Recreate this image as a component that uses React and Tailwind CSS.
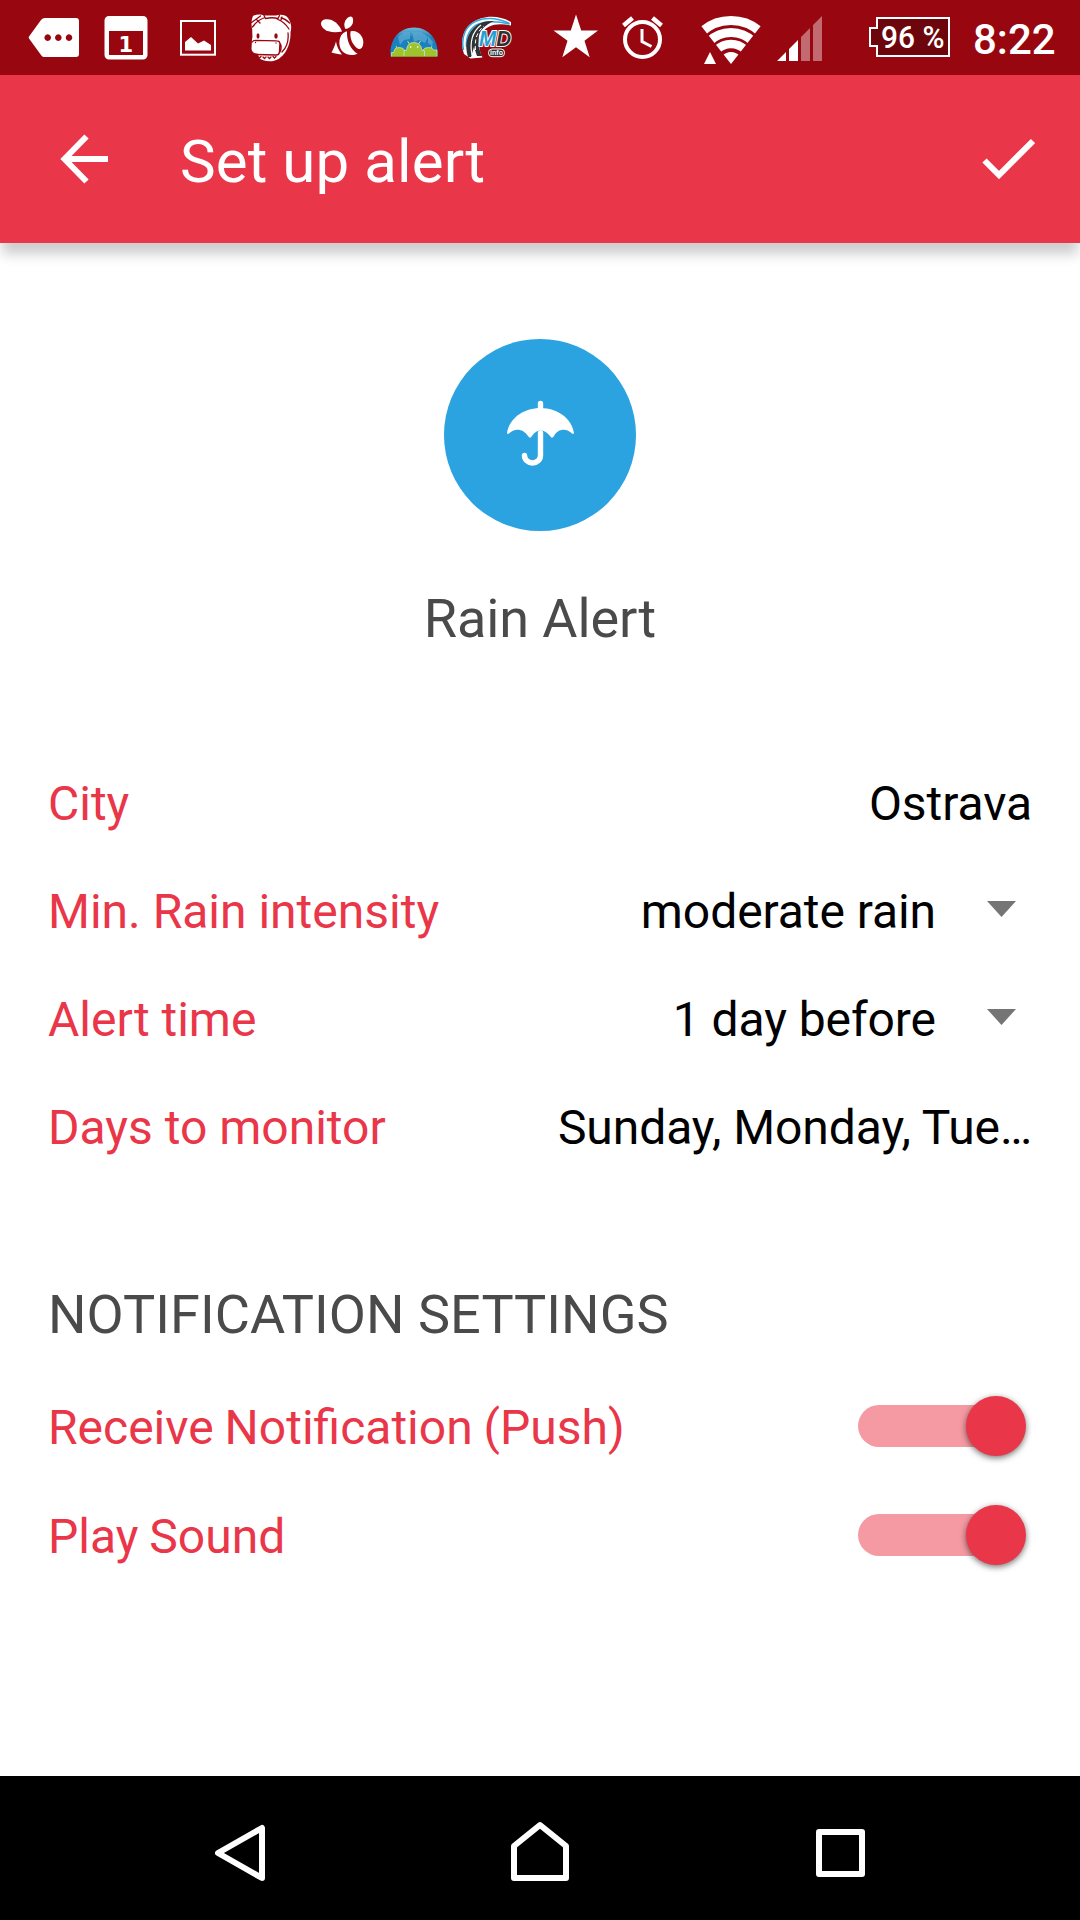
import { useState } from 'react'

const settings = [
  { label: 'City', value: 'Ostrava' },
  { label: 'Min. Rain intensity', value: 'moderate rain', dropdown: true },
  { label: 'Alert time', value: '1 day before', dropdown: true },
  { label: 'Days to monitor', value: 'Sunday, Monday, Tue…' },
]

/* Status bar, notification side */

function MessageIcon() {
  return (
    <svg className="ml-[28px] shrink-0" width="52" height="75" viewBox="28 0 52 75">
      <path fill="#fff" fillRule="evenodd" d="M45 18h31a3 3 0 0 1 3 3v33a3 3 0 0 1-3 3H44q-2 0-3-2L29 38.500q-.6-1 0-2L41 20q1.500-2 4-2ZM47.700 34.300a3.300 3.300 0 1 0 .01 0ZM58.300 34.300a3.300 3.300 0 1 0 .01 0ZM69 34.300a3.300 3.300 0 1 0 .01 0Z" />
    </svg>
  )
}

function CalendarIcon() {
  return (
    <svg className="ml-[24px] shrink-0" width="44" height="75" viewBox="104 0 44 75">
      <path fill="#fff" fillRule="evenodd" d="M109 16h34a4.500 4.500 0 0 1 4.500 4.500v34.500a4.500 4.500 0 0 1-4.500 4.500h-34a4.500 4.500 0 0 1-4.500-4.500V20.500a4.500 4.500 0 0 1 4.500-4.500ZM109 31v24h34V31Z" />
      <text x="125.700" y="51.500" fill="#fff" textAnchor="middle" fontSize="21" fontWeight="700" fontFamily="DejaVu Sans, sans-serif">1</text>
    </svg>
  )
}

function PictureIcon() {
  return (
    <svg className="ml-[32px] shrink-0" width="36" height="75" viewBox="180 0 36 75">
      <rect x="181" y="21" width="34" height="33.700" fill="none" stroke="#fff" strokeWidth="2" />
      <path fill="#fff" d="M185 50.500v-8.500l6-5 7 6.500 6-3 7 4.500v5.500z" />
    </svg>
  )
}

function HippoIcon() {
  return (
    <svg className="ml-[35px] shrink-0" width="41" height="75" viewBox="251 0 41 75">
      <path fill="#fff" d="M253 16c3-2 8-2 11-.5h12c5-1.500 10-.5 12 2.500 3 4 4 9 2.500 14 .5 12-5 26-17 29-6 .8-12-.2-15.500-4l.5-3c-4-.5-6.500-1.500-7-5l.5-10c1-2 0-5 .3-9-1.300-5-1-10 .700-14Z" />
      <g fill="none" stroke="#980710" strokeWidth="1.300" strokeLinecap="round">
        <path d="M251.500 22.500l9-6.500M252.500 27c4-5.500 8-8 12.500-9.500M264 15.500l1.500 3q7-1.500 12.500 0l1.500-3M277 19c5 2 9 5 12 10M281 18c4 .5 6 2.500 8.500 5M257 20l3 3M282 17l-1 3" />
        <path d="M252.200 42q.8-1.700 3.500-1.700l21 .5q3 0 3.200 2.700l-.5 9q-.5 2.500-3 2.500l-21-.5M280.500 44q1.500 4-.5 8M288 33c1 9-2 15-6 19" />
        <path d="M258 56.500l1.500 1.500 1.500-1.500M263 57l1.500 1.500 1.500-1.500M268 57l1.500 1.500 1.500-1.500M273 56.500l1.500 1.500 1.500-1.500" />
      </g>
      <g fill="#980710">
        <ellipse cx="258" cy="36" rx="1.500" ry="2.700" />
        <ellipse cx="276" cy="36" rx="1.700" ry="2.800" />
        <circle cx="255.500" cy="42.500" r=".7" />
        <circle cx="276" cy="43" r=".7" />
      </g>
    </svg>
  )
}

function BeeIcon() {
  return (
    <svg className="ml-[28px] shrink-0" width="44" height="75" viewBox="320 0 44 75">
      <g fill="#fff">
        <path d="M342 31.500c-7 1.500-14.500.8-18.500-3-4-4-3-8.600 2-9.200 7-.8 13.500 4.200 16.500 12.200Z" />
        <path d="M345.500 29c-3.200-5.500.5-11.500 5-12.500 3-.2 3.200 5 1.700 8-1.500 2.600-3.700 4.200-6.700 4.500Z" />
        <path d="M346 31.500c-8 3-8 14.500-4 19.500 4 4.500 11 5 15.500 2.800-7-4.500-11-12.800-10.500-22.300Z" />
        <path d="M350.500 31.500c6.500-2 12.500 4 12.800 10.500 0 5-2 7.500-4.800 7-5.500-3-9-10-8-17.500Z" />
        <path d="M336 41.500c-1 3.500-2.500 7.500-4.500 11 3.500 1 7 1.800 10.500 2-3-4-5.500-8.500-6-13Z" />
      </g>
    </svg>
  )
}

function DroidsIcon() {
  return (
    <svg className="ml-[25px] shrink-0" width="50" height="75" viewBox="389 0 50 75">
      <defs>
        <linearGradient id="sky" x1="0" y1="0" x2="0" y2="1">
          <stop offset="0" stopColor="#6fb9da" />
          <stop offset=".35" stopColor="#1d7fba" />
          <stop offset="1" stopColor="#1186ca" />
        </linearGradient>
      </defs>
      <path d="M390.500 56.500C389 40 399 27.500 414 27.500S439 40 437.500 56.500Z" fill="url(#sky)" />
      <path d="M398 37l6-5h6v7l-6 1-4 5zM412 32h9l7 5-3 6-6-3-5 2zM428 36l5 6-1 4-4-3z" fill="#5da9d2" opacity=".75" />
      <g fill="#9dc32f" stroke="#dbe8b4" strokeWidth=".7">
        <path d="M391.500 56.500v-4h2.500v-1.500q.5-3.500 5-3.500t6 3v6zM437 56.500v-6.500h-3.500q-.5-2.500-5-2.500t-6 3v6z" />
        <path d="M404 56.500v-6h2.500q.5-8 7.500-8t8 8h2.500v6z" />
      </g>
      <path d="M407.500 41l2 3M420.500 41l-2 3M396 46l1 2M432 46l-1 2" stroke="#c9de86" />
      <path d="M391.500 56.500h45.500" stroke="#819c2c" strokeWidth="1" />
      <path d="M410 47h1.300M417 47h1.300" stroke="#fff" strokeWidth="1.300" />
    </svg>
  )
}

function RoadInfoIcon() {
  return (
    <svg className="ml-[22px] shrink-0" width="52" height="75" viewBox="461 0 52 75">
      <path d="M464 54c-4-13-1-25 8-31 10-7.500 26-8.500 39-1v3.500c-14-3-24-.5-29 7.500-4 8-3.500 17 .5 24.500l-12 1z" fill="#fff" />
      <g fill="none" stroke="#35a9dc" strokeWidth="1.500">
        <path d="M463.500 50c-3-14 3-25 13-29 9-3.500 21-3 33 2.500" />
        <path d="M466.500 47c-1-11 4-20 12-23 9-3.500 19-3 31 0" />
      </g>
      <path d="M468 57c-4-12-1-25 9-32 5-3 10-4.500 17-4-9 4-14 9-15 15-1 8 0 14 3 20h-5l-3-9-3 10z" fill="#303336" />
      <path d="M472 55c-2.500-13 0-23 9-30" fill="none" stroke="#fff" strokeWidth="1.200" />
      <path d="M475.500 50c-1-10 1-18 8.500-24" fill="none" stroke="#fff" strokeWidth="1" strokeDasharray="4 2.500" />
      <text
        x="479"
        y="46"
        fontFamily="Liberation Sans, sans-serif"
        fontWeight="700"
        fontStyle="italic"
        fontSize="21.500"
        stroke="#fff"
        strokeWidth="2"
        paintOrder="stroke"
        strokeLinejoin="round"
        textLength="32"
        lengthAdjust="spacingAndGlyphs"
      >
        <tspan fill="#239ed5">M</tspan>
        <tspan fill="#2f3235">D</tspan>
      </text>
      <rect x="488.500" y="49" width="16" height="7.700" rx="3.500" fill="#303336" stroke="#fff" />
      <text x="496.500" y="55.300" fontSize="7" fontWeight="700" fill="#fff" textAnchor="middle" fontFamily="Liberation Sans, sans-serif">info</text>
    </svg>
  )
}

/* Status bar, system side */

function StarIcon() {
  return (
    <svg className="ml-[40px] shrink-0" width="46" height="75" viewBox="553 0 46 75">
      <path fill="#fff" d="M576 14.500l5.200 16H598l-13.500 10.200 5.200 16.500L576 47.200l-13.700 10 5.200-16.500L553.500 30.500h17.300z" />
    </svg>
  )
}

function AlarmIcon() {
  return (
    <svg className="ml-[22px] shrink-0" width="44" height="75" viewBox="621 0 44 75">
      <g fill="none" stroke="#fff">
        <circle cx="642.500" cy="39.500" r="17.500" strokeWidth="4" />
        <path d="M623.500 25.500l9-7.500M661.500 25.500l-9-7.500" strokeWidth="4.500" />
        <path d="M642 29v12.500l9.500 5" strokeWidth="3" />
      </g>
    </svg>
  )
}

function WifiIcon() {
  return (
    <svg className="ml-[36px] shrink-0" width="60" height="75" viewBox="701 0 60 75">
      <clipPath id="wedge">
        <path d="M731 64L696 19.500V0h70v19.500z" />
      </clipPath>
      <g clipPath="url(#wedge)" fill="none" stroke="#fff">
        <circle cx="731" cy="64" r="43.500" strokeWidth="9" />
        <circle cx="731" cy="64" r="31.500" strokeWidth="9" />
        <circle cx="731" cy="64" r="20" strokeWidth="8.500" />
        <circle cx="731" cy="64" r="6" strokeWidth="12" />
      </g>
      <path fill="#fff" d="M710 52l6 12h-12z" />
    </svg>
  )
}

function SignalIcon() {
  return (
    <svg className="ml-[16px] shrink-0" width="46" height="75" viewBox="777 0 46 75">
      <path fill="#fff" d="M777 61l9-9v9zM789 61V49l9-9v21z" />
      <path fill="#fff" fillOpacity=".4" d="M801 61V37l9-9v33zM813 61V25l9-9v45z" />
    </svg>
  )
}

function BatteryIcon() {
  return (
    <svg className="ml-[46px] shrink-0" width="82" height="75" viewBox="869 0 82 75">
      <path d="M877 18h72v38h-72V46h-7V28h7z" fill="#6d060c" stroke="#fff" strokeWidth="2" />
      <text x="881" y="47.700" fill="#fff" fontSize="31" fontWeight="500" fontFamily="Roboto, sans-serif" textLength="63.500" lengthAdjust="spacingAndGlyphs">96 %</text>
    </svg>
  )
}

function StatusBar() {
  return (
    <div className="flex h-[75px] items-center bg-[#980710] text-white">
      <MessageIcon />
      <CalendarIcon />
      <PictureIcon />
      <HippoIcon />
      <BeeIcon />
      <DroidsIcon />
      <RoadInfoIcon />
      <StarIcon />
      <AlarmIcon />
      <WifiIcon />
      <SignalIcon />
      <BatteryIcon />
      <span className="ml-[22px] pt-[4px] text-[42px] leading-none font-medium whitespace-nowrap">8:22</span>
    </div>
  )
}

function Toolbar() {
  return (
    <header className="relative z-10 flex h-[168px] items-center bg-[#e93648] pr-[45px] pl-[60px] text-white shadow-[0_13px_12px_-2px_rgba(0,0,0,0.2)]">
      <button aria-label="Back">
        <svg width="48" height="50" viewBox="60 135 48 50" fill="none" stroke="#fff" strokeWidth="6">
          <path d="M86.500 137.500L64.500 160L86.500 182.500M65 160h43" />
        </svg>
      </button>
      <h1 className="ml-[72px] flex-1 pt-[5px] text-[60px] leading-none tracking-[0.1px]">Set up alert</h1>
      <button aria-label="Save">
        <svg width="53" height="42" viewBox="982 139 53 42" fill="none" stroke="#fff" strokeWidth="6">
          <path d="M984.500 161.500L999 176L1033 142" />
        </svg>
      </button>
    </header>
  )
}

function SettingRow({ label, value, dropdown }) {
  return (
    <div className="flex h-[108px] items-center justify-between text-[48px] leading-[108px] whitespace-nowrap">
      <span className="text-[#e93648]">{label}</span>
      <span className="flex items-center tracking-[-0.07px] text-black">
        {value}
        {dropdown && (
          <svg className="mr-[15px] mb-[6px] ml-[51px]" width="30" height="16" viewBox="0 0 30 16">
            <path d="M0 0h29L14.500 16z" fill="#757575" />
          </svg>
        )}
      </span>
    </div>
  )
}

function ToggleRow({ label }) {
  const [on, setOn] = useState(true)

  return (
    <div className="flex h-[109px] items-center justify-between text-[48px] leading-[109px] whitespace-nowrap text-[#e93648] [word-spacing:-1px]">
      <span>{label}</span>
      <button
        role="switch"
        aria-checked={on}
        aria-label={label}
        onClick={() => setOn(!on)}
        className={`mr-[15px] mb-[4px] flex h-[42px] w-[159px] items-center rounded-full ${
          on ? 'justify-end bg-[#f59aa3]' : 'justify-start bg-gray-400'
        }`}
      >
        <span className={`-mr-[9px] size-[60px] shrink-0 rounded-full shadow-[0_2px_6px_rgba(0,0,0,0.55)] ${on ? 'bg-[#e93648]' : 'bg-gray-100'}`} />
      </button>
    </div>
  )
}

function NavigationBar() {
  return (
    <nav className="flex h-[144px] items-center bg-black">
      <svg className="ml-[214px]" width="52" height="144" viewBox="214 1776 52 144" fill="none" stroke="#fff" strokeWidth="6" strokeLinejoin="round">
        <path d="M262 1828v50L218 1853z" />
      </svg>
      <svg className="ml-[245px]" width="58" height="144" viewBox="511 1776 58 144" fill="none" stroke="#fff" strokeWidth="6" strokeLinejoin="round">
        <path d="M514 1878v-32l26-21 26 21v32z" />
      </svg>
      <svg className="ml-[247px]" width="50" height="144" viewBox="816 1776 50 144" fill="none" stroke="#fff" strokeWidth="6" strokeLinejoin="round">
        <path d="M819 1832h43v42h-43z" />
      </svg>
    </nav>
  )
}

export default function App() {
  return (
    <div className="flex h-[1920px] w-[1080px] flex-col overflow-hidden bg-white font-['Roboto',sans-serif]">
      <StatusBar />
      <Toolbar />

      <main className="flex flex-1 flex-col px-12 pt-24">
        <section className="flex flex-col items-center">
          <div className="flex size-[192px] items-center justify-center rounded-full bg-[#2aa3e0]">
            <svg className="mb-[4px]" width="68" height="66" viewBox="506 400 68 66">
              <path d="M507 433c2-14 16-25 33.500-25s31.500 11 33.500 25q-.5 1.500-2 .5c-5-5.500-14-5.500-18 2.500q-2 3.500-4 0c-5-7.500-14-7.500-18 0q-2 3.500-4 0c-5-8-14-8-19-2.500q-1.500 1-2-.5Z" fill="#fff" />
              <path d="M540.500 407v-3.500M540.500 433v22.500a8 7.500 0 0 1-16 0" fill="none" stroke="#fff" strokeWidth="5.400" strokeLinecap="round" />
            </svg>
          </div>
          <h2 className="mt-[50px] text-[54px] leading-[76px] tracking-[-0.1px] text-[#4a4a4a]">Rain Alert</h2>
        </section>

        <section className="mt-[93px]">
          {settings.map(s => (
            <SettingRow key={s.label} {...s} />
          ))}
        </section>

        <section className="mt-[95px]">
          <h2 className="mb-[20px] text-[54px] leading-[76px] tracking-[0.05px] text-[#4a4a4a]">NOTIFICATION SETTINGS</h2>
          <ToggleRow label="Receive Notification (Push)" />
          <ToggleRow label="Play Sound" />
        </section>
      </main>

      <NavigationBar />
    </div>
  )
}
